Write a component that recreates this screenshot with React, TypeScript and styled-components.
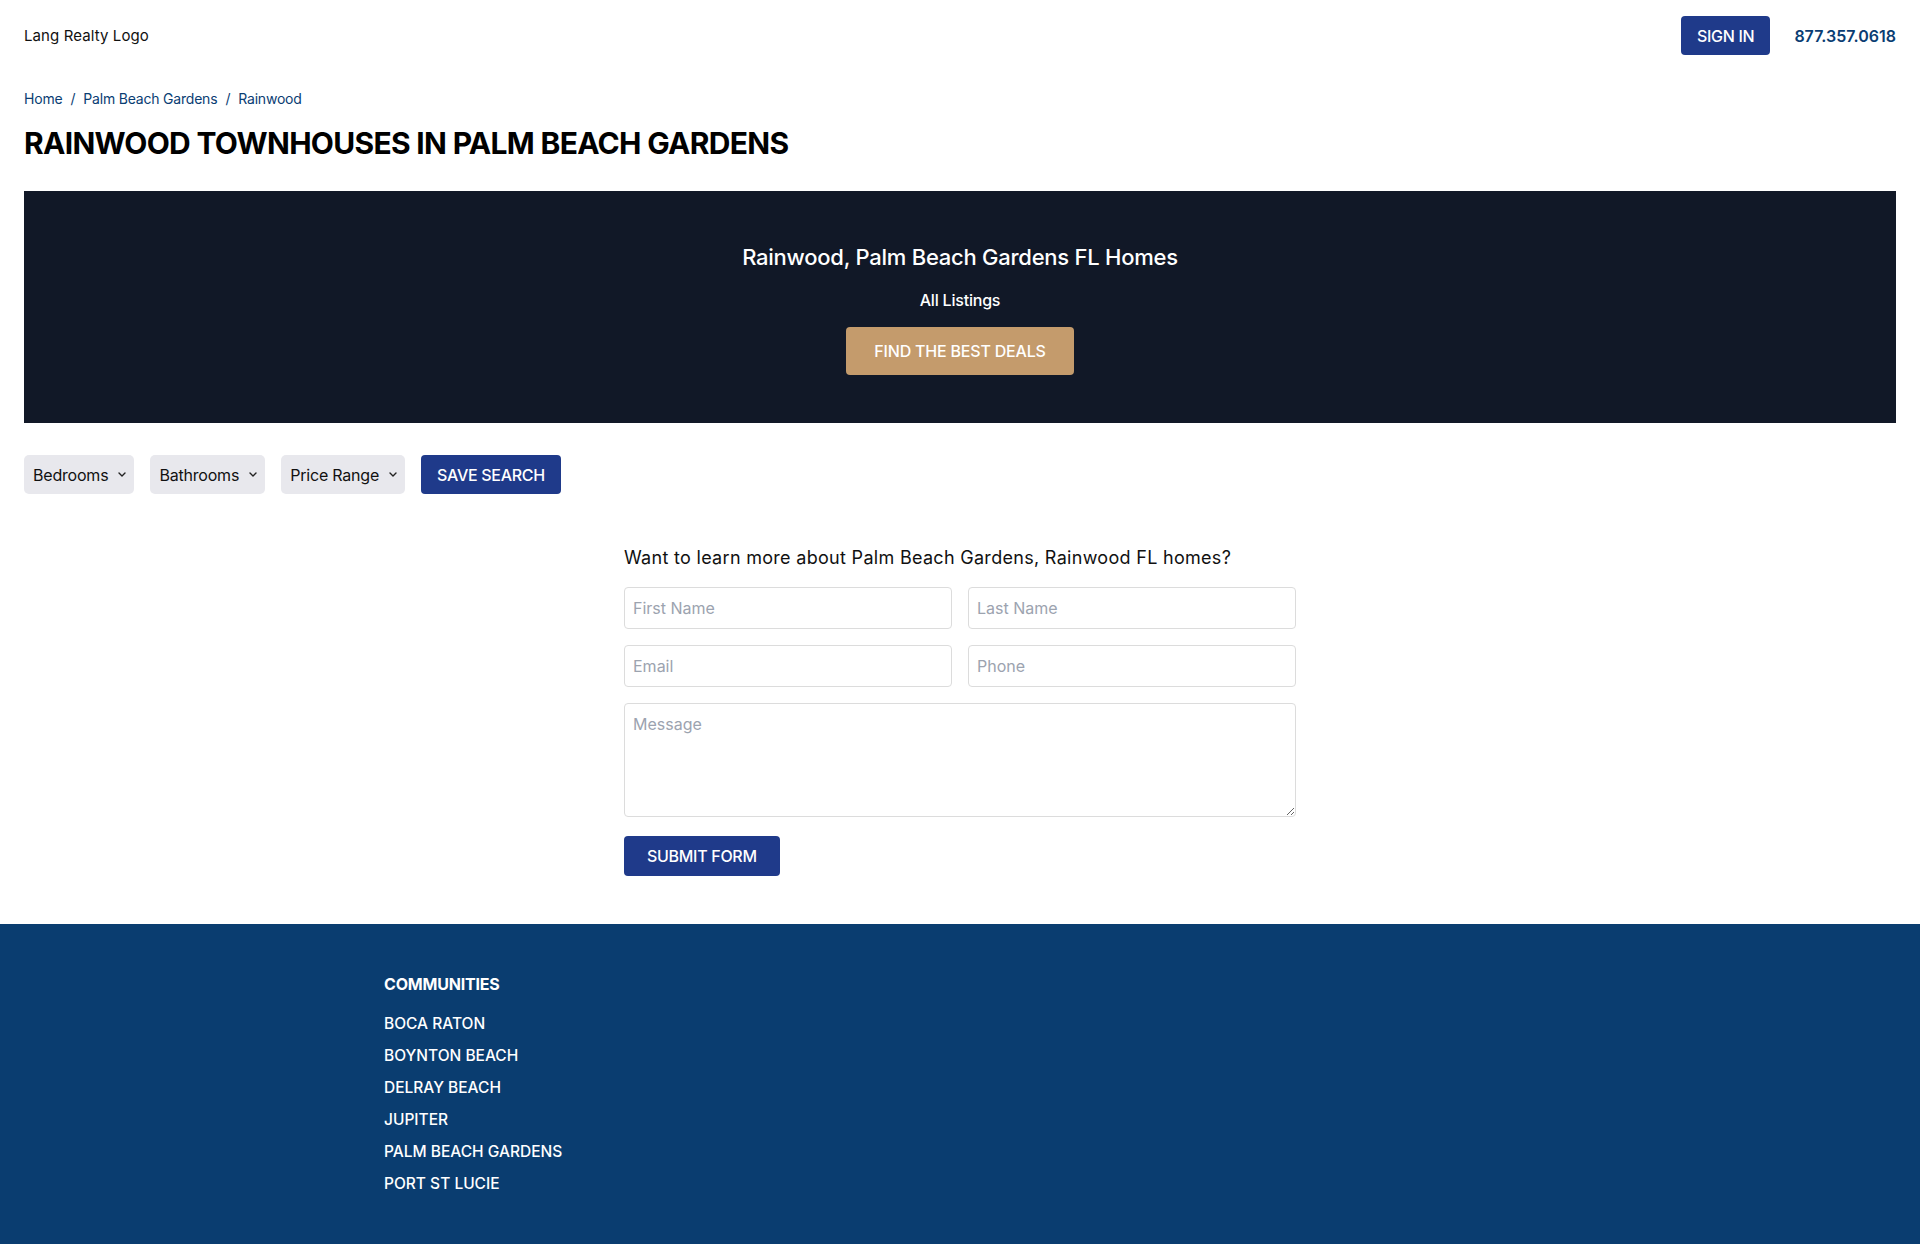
import React from "react";
import styled, { createGlobalStyle } from "styled-components";

const GlobalStyle = createGlobalStyle`
  * { box-sizing: border-box; }
  html, body { margin: 0; padding: 0; background: #ffffff; }
  body {
    font-family: Inter, "Noto Sans", sans-serif;
    color: #000000;
    -webkit-font-smoothing: antialiased;
  }
`;

const BLUE = "#1f3a8a";
const NAVY = "#0a3d73";

const Header = styled.header`
  display: flex;
  justify-content: space-between;
  align-items: center;
  padding: 16px 24px 0;
`;

const Logo = styled.div`
  font-size: 15px;
  line-height: 20px;
  letter-spacing: 0.1px;
  color: #111111;
`;

const HeaderRight = styled.div`
  display: flex;
  align-items: center;
  gap: 24px;
`;

const BlueButton = styled.button<{ $h?: number; $px?: number }>`
  height: ${(p) => p.$h ?? 39}px;
  padding: 0 ${(p) => p.$px ?? 16}px;
  background: ${BLUE};
  color: #ffffff;
  border: none;
  border-radius: 4px;
  font-family: Inter, "Noto Sans", sans-serif;
  font-size: 16px;
  font-weight: 500;
  letter-spacing: -0.3px;
  cursor: pointer;
  white-space: nowrap;
`;

const Phone = styled.a`
  color: ${NAVY};
  font-size: 16px;
  font-weight: 600;
  text-decoration: none;
`;

const Main = styled.main`
  padding: 0 24px;
`;

const Breadcrumb = styled.nav`
  margin-top: 34px;
  font-size: 14px;
  line-height: 20px;
  letter-spacing: -0.2px;
  color: ${NAVY};
  display: flex;
  align-items: center;
`;

const Crumb = styled.a`
  color: ${NAVY};
  text-decoration: none;
`;

const Sep = styled.span`
  margin: 0 8px;
  color: ${NAVY};
`;

const Title = styled.h1`
  margin: 16px 0 0;
  font-size: 30px;
  line-height: 36px;
  font-weight: 700;
  color: #000000;
  letter-spacing: -0.7px;
`;

const Banner = styled.section`
  margin-top: 30px;
  background: #111827;
  padding: 48px 24px;
  display: flex;
  flex-direction: column;
  align-items: center;
  color: #ffffff;
`;

const BannerTitle = styled.h2`
  margin: 0;
  font-size: 22px;
  line-height: 32px;
  font-weight: 500;
  letter-spacing: -0.25px;
  padding-top: 2px;
  height: 32px;
`;

const BannerSub = styled.div`
  margin-top: 17px;
  font-size: 16px;
  line-height: 24px;
  font-weight: 500;
  letter-spacing: -0.2px;
`;

const GoldButton = styled.button`
  margin-top: 15px;
  height: 48px;
  padding: 0 28px;
  background: #c49b6c;
  color: #ffffff;
  border: none;
  border-radius: 4px;
  font-family: Inter, "Noto Sans", sans-serif;
  font-size: 16px;
  font-weight: 500;
  letter-spacing: -0.2px;
  cursor: pointer;
`;

const FilterRow = styled.div`
  margin-top: 32px;
  display: flex;
  gap: 16px;
  align-items: center;
`;

const SelectBox = styled.button`
  height: 39px;
  display: flex;
  align-items: center;
  gap: 10px;
  padding: 0 8px 0 9px;
  background: #e8e8ed;
  border: none;
  border-radius: 5px;
  font-family: Inter, "Noto Sans", sans-serif;
  font-size: 16px;
  letter-spacing: -0.2px;
  color: #111111;
  cursor: pointer;
`;

const Chevron = () => (
  <svg width="8" height="5" viewBox="0 0 8 5" fill="none">
    <path d="M1 1l3 3 3-3" stroke="#222" strokeWidth="1.4" strokeLinecap="round" strokeLinejoin="round" />
  </svg>
);

const FormSection = styled.section`
  width: 672px;
  margin: 50px auto 0;
`;

const Question = styled.h3`
  margin: 0 0 15px;
  font-size: 18px;
  line-height: 28px;
  font-weight: 400;
  letter-spacing: 0.3px;
  color: #111111;
`;

const FormGrid = styled.form`
  display: grid;
  grid-template-columns: 1fr 1fr;
  gap: 16px;
`;

const Input = styled.input`
  height: 42px;
  width: 100%;
  padding: 0 8px;
  border: 1px solid #dcdcdc;
  border-radius: 4px;
  font-family: Inter, "Noto Sans", sans-serif;
  font-size: 16px;
  color: #111;
  outline: none;
  &::placeholder { color: #9ca3af; }
`;

const TextArea = styled.textarea`
  grid-column: span 2;
  height: 114px;
  width: 100%;
  padding: 8px;
  border: 1px solid #dcdcdc;
  border-radius: 4px;
  font-family: Inter, "Noto Sans", sans-serif;
  font-size: 16px;
  line-height: 24px;
  resize: vertical;
  outline: none;
  &::placeholder { color: #9ca3af; }
`;

const SubmitRow = styled.div`
  grid-column: span 2;
  margin-top: 3px;
`;

const Footer = styled.footer`
  margin-top: 48px;
  background: #0a3d70;
  padding: 48px 0;
  color: #ffffff;
  font-family: Inter, "Noto Sans", sans-serif;
`;

const FooterInner = styled.div`
  width: 1152px;
  margin: 0 auto;
`;

const FooterHeading = styled.h4`
  margin: 0;
  font-size: 16px;
  line-height: 24px;
  font-weight: 700;
  letter-spacing: -0.2px;
`;

const FooterList = styled.ul`
  list-style: none;
  margin: 16px 0 0;
  padding: 0;
  display: flex;
  flex-direction: column;
  gap: 8px;
`;

const FooterLink = styled.a`
  display: block;
  font-size: 15.5px;
  line-height: 24px;
  font-weight: 500;
  color: #ffffff;
  text-decoration: none;
`;

const communities = [
  "BOCA RATON",
  "BOYNTON BEACH",
  "DELRAY BEACH",
  "JUPITER",
  "PALM BEACH GARDENS",
  "PORT ST LUCIE",
];

export default function App() {
  return (
    <>
      <GlobalStyle />
      <Header>
        <Logo>Lang Realty Logo</Logo>
        <HeaderRight>
          <BlueButton $px={16}>SIGN IN</BlueButton>
          <Phone href="#">877.357.0618</Phone>
        </HeaderRight>
      </Header>
      <Main>
        <Breadcrumb>
          <Crumb href="#">Home</Crumb>
          <Sep>/</Sep>
          <Crumb href="#">Palm Beach Gardens</Crumb>
          <Sep>/</Sep>
          <Crumb href="#">Rainwood</Crumb>
        </Breadcrumb>
        <Title>RAINWOOD TOWNHOUSES IN PALM BEACH GARDENS</Title>
        <Banner>
          <BannerTitle>Rainwood, Palm Beach Gardens FL Homes</BannerTitle>
          <BannerSub>All Listings</BannerSub>
          <GoldButton>FIND THE BEST DEALS</GoldButton>
        </Banner>
        <FilterRow>
          <SelectBox>Bedrooms<Chevron /></SelectBox>
          <SelectBox>Bathrooms<Chevron /></SelectBox>
          <SelectBox>Price Range<Chevron /></SelectBox>
          <BlueButton $px={16}>SAVE SEARCH</BlueButton>
        </FilterRow>
        <FormSection>
          <Question>Want to learn more about Palm Beach Gardens, Rainwood FL homes?</Question>
          <FormGrid onSubmit={(e) => e.preventDefault()}>
            <Input placeholder="First Name" />
            <Input placeholder="Last Name" />
            <Input placeholder="Email" />
            <Input placeholder="Phone" />
            <TextArea placeholder="Message" />
            <SubmitRow>
              <BlueButton type="submit" $h={40} $px={23}>SUBMIT FORM</BlueButton>
            </SubmitRow>
          </FormGrid>
        </FormSection>
      </Main>
      <Footer>
        <FooterInner>
          <FooterHeading>COMMUNITIES</FooterHeading>
          <FooterList>
            {communities.map((c) => (
              <li key={c}>
                <FooterLink href="#">{c}</FooterLink>
              </li>
            ))}
          </FooterList>
        </FooterInner>
      </Footer>
    </>
  );
}
